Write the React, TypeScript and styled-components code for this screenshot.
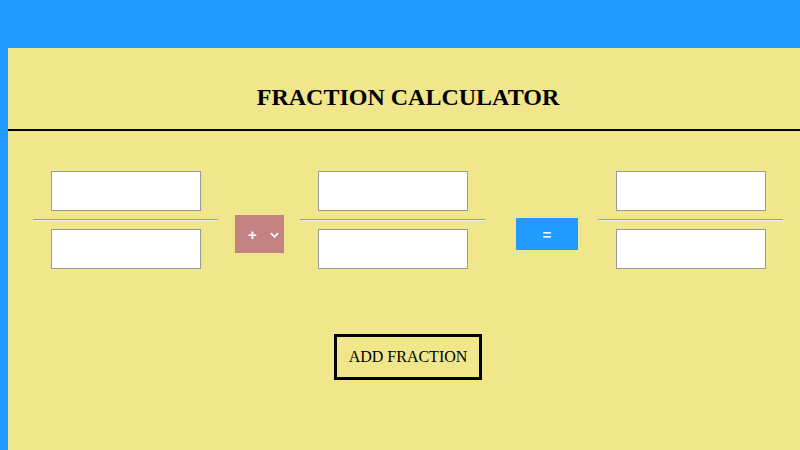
import styled, { createGlobalStyle } from "styled-components";

const GlobalStyle = createGlobalStyle`
  html {
    overflow: hidden;
  }
  body {
    margin: 48px 0 0 8px;
    background: #219bff;
    font-family: "Liberation Serif", "Times New Roman", serif;
  }
`;

const Fraction = () => (
  <FractionBox>
    <NumberInput type="text" />
    <FractionLine />
    <NumberInput type="text" />
  </FractionBox>
);

const App = () => {
  return (
    <>
      <GlobalStyle />
      <Card>
        <Header>
          <Title>FRACTION CALCULATOR</Title>
        </Header>
        <Row>
          <Fraction />
          <OperatorWrap>
            <OperatorSelect defaultValue="+">
              <option value="+">+</option>
              <option value="-">-</option>
              <option value="*">*</option>
              <option value="/">/</option>
            </OperatorSelect>
            <Chevron viewBox="0 0 10 6" aria-hidden>
              <path d="M1 1 L5 5 L9 1" />
            </Chevron>
          </OperatorWrap>
          <Fraction />
          <EqualsButton>=</EqualsButton>
          <Fraction />
        </Row>
        <Footer>
          <AddButton>ADD FRACTION</AddButton>
        </Footer>
      </Card>
    </>
  );
};

export default App;

const Card = styled.div`
  width: 800px;
  height: 402px;
  background-color: #f0e68c;
  box-shadow: 0 0 7px rgba(0, 0, 0, 0.45);
`;

const Header = styled.div`
  padding: 36px 0 18px;
  border-bottom: 2px solid #000;
  text-align: center;
`;

const Title = styled.h2`
  margin: 0;
  font-size: 24px;
  line-height: 27px;
  font-weight: bold;
  color: #000;
`;

const Row = styled.div`
  display: flex;
  align-items: flex-start;
  padding: 40px 0 0 25px;
`;

const FractionBox = styled.div`
  width: 185px;
  display: flex;
  flex-direction: column;
  align-items: center;

  & + div {
    margin-left: 17px;
  }
`;

const NumberInput = styled.input`
  box-sizing: border-box;
  width: 150px;
  height: 40px;
  border: 1px solid #999;
  background: #fff;
  outline: none;
  padding: 0 6px;
  font-size: 16px;
`;

const FractionLine = styled.hr`
  width: 100%;
  box-sizing: border-box;
  margin: 8px 0;
  border: 0;
  border-top: 1px solid #9a9a9a;
  border-bottom: 1px solid #eeeeee;
`;

const OperatorWrap = styled.div`
  position: relative;
  margin: 44px 16px 0 17px;
  width: 49px;
  height: 38px;
`;

const OperatorSelect = styled.select`
  appearance: none;
  width: 100%;
  height: 100%;
  border: 0;
  border-radius: 0;
  background: #c48383;
  color: #fff;
  font-family: "Liberation Sans", Arial, sans-serif;
  font-weight: bold;
  font-size: 15px;
  padding: 0 0 0 13px;
  outline: none;
  cursor: pointer;
`;

const Chevron = styled.svg`
  position: absolute;
  top: 17px;
  right: 5px;
  width: 9px;
  height: 6px;
  fill: none;
  stroke: #fff;
  stroke-width: 2;
  pointer-events: none;
`;

const EqualsButton = styled.button`
  width: 62px;
  height: 32px;
  margin: 47px 20px 0 31px;
  border: 0;
  background: #219bff;
  color: #fff;
  font-family: "Liberation Sans", Arial, sans-serif;
  font-weight: bold;
  font-size: 15px;
  cursor: pointer;
`;

const Footer = styled.div`
  display: flex;
  justify-content: center;
  padding-top: 65px;
`;

const AddButton = styled.button`
  box-sizing: border-box;
  width: 148px;
  height: 46px;
  border: 3px solid #000;
  background: transparent;
  font-family: "Liberation Serif", "Times New Roman", serif;
  font-size: 16px;
  color: #000;
  cursor: pointer;
`;
